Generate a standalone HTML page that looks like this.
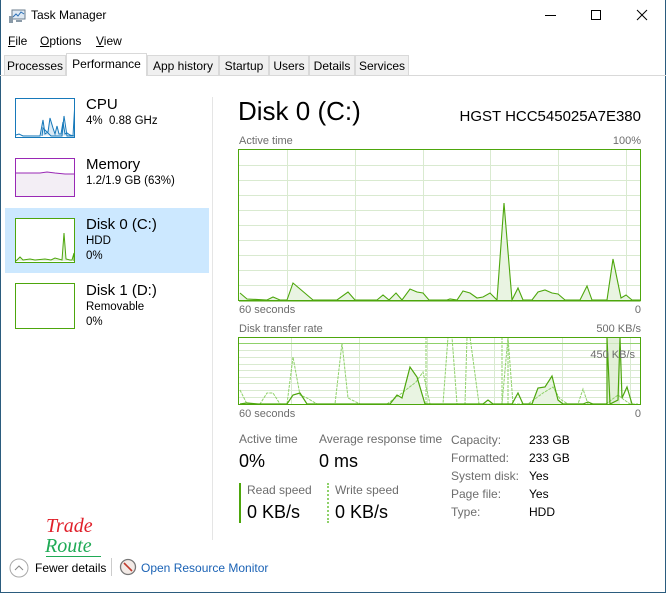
<!DOCTYPE html>
<html><head><meta charset="utf-8"><style>
*{margin:0;padding:0;box-sizing:border-box}
body{width:666px;height:593px;position:relative;background:#fff;font-family:"Liberation Sans",sans-serif;color:#000;overflow:hidden}
.a{position:absolute;white-space:nowrap}
.g{color:#6d6d6d;font-size:11px}
.tab{position:absolute;top:55px;height:20px;border:1px solid #d9d9d9;border-bottom:none;background:#f0f0f0;font-size:12px;padding:3px 0 0 0;text-align:center}
</style></head><body>
<div class="a" style="left:0;top:0;width:1px;height:593px;background:#2b5c7e"></div>
<div class="a" style="right:0;top:0;width:1px;height:593px;background:#2b5c7e"></div>
<div class="a" style="left:0;bottom:0;width:666px;height:1px;background:#2b5c7e"></div>
<svg class="a" style="left:9px;top:8px" width="18" height="16"><rect x="3" y="2" width="13" height="9" fill="#dfe9f3" stroke="#6b7d8e"/><polyline points="4,9 7,6 9,8 12,4 15,6" fill="none" stroke="#2b6fb5"/><rect x="0" y="8" width="4" height="7" fill="#8a9aa8"/><rect x="7" y="12" width="6" height="2" fill="#8a9aa8"/></svg>
<div class="a" style="left:31px;top:8px;font-size:12px">Task Manager</div>
<div class="a" style="left:545px;top:15px;width:11px;height:1px;background:#000"></div>
<div class="a" style="left:591px;top:10px;width:10px;height:10px;border:1px solid #000"></div>
<svg class="a" style="left:636px;top:9px" width="12" height="12"><path d="M1 1L11 11M11 1L1 11" stroke="#000"/></svg>
<div class="a" style="left:8px;top:34px;font-size:12px"><u>F</u>ile</div>
<div class="a" style="left:40px;top:34px;font-size:12px"><u>O</u>ptions</div>
<div class="a" style="left:96px;top:34px;font-size:12px"><u>V</u>iew</div>
<div class="a" style="left:0;top:75px;width:666px;height:1px;background:#d9d9d9"></div>
<div class="tab" style="left:4px;width:62px">Processes</div>
<div class="tab" style="left:66px;top:53px;height:23px;width:81px;background:#fff;padding-top:3px">Performance</div>
<div class="tab" style="left:147px;width:72px">App history</div>
<div class="tab" style="left:219px;width:50px">Startup</div>
<div class="tab" style="left:269px;width:40px">Users</div>
<div class="tab" style="left:309px;width:46px">Details</div>
<div class="tab" style="left:355px;width:54px">Services</div>
<div class="a" style="left:212px;top:97px;width:1px;height:443px;background:#e5e5e5"></div>
<div class="a" style="left:5px;top:208px;width:204px;height:65px;background:#cce8ff"></div>
<svg class="a" style="left:15px;top:98px" width="60" height="41"><rect x="0.5" y="0.5" width="59" height="39" fill="#fff" stroke="#1779ba"/><polyline points="1,37 4,36 8,38 25,38 28,22 30,36 33,34 35,20 38,30 40,36 42,28 44,36 46,36 48,24 50,36 52,35 55,37 59,38" fill="#dbeaf5" stroke="#1779ba"/><polyline points="27,38 28,30 36,38 47,38 49,18 52,38 58,38 60,3" fill="none" stroke="#1779ba"/></svg>
<div class="a" style="left:86px;top:96px;font-size:15px">CPU</div>
<div class="a" style="left:86px;top:115px;font-size:11.5px">4%&nbsp; 0.88 GHz</div>
<svg class="a" style="left:15px;top:158px" width="60" height="40"><rect x="0.5" y="0.5" width="59" height="38" fill="#fff" stroke="#9928b5"/><path d="M1 15L25 15L32 14L40 15L50 16L59 16L59 38L1 38Z" fill="#f3eef5" stroke="none"/><polyline points="1,15 25,15 32,14 40,15 50,16 59,16" fill="none" stroke="#9928b5"/></svg>
<div class="a" style="left:86px;top:156px;font-size:15px">Memory</div>
<div class="a" style="left:86px;top:175px;font-size:11.5px">1.2/1.9 GB (63%)</div>
<svg class="a" style="left:15px;top:218px" width="60" height="46"><rect x="0.5" y="0.5" width="59" height="44" fill="#fff" stroke="#4da60c"/><polyline points="1,43 5,39 8,42 15,41 20,42 30,41 36,42 40,40 47,42 49,15 51,41 55,42 57,42 59,35 59,43" fill="#e6f2dc" stroke="#4da60c"/></svg>
<div class="a" style="left:86px;top:216px;font-size:15px">Disk 0 (C:)</div>
<div class="a" style="left:86px;top:235px;font-size:11.5px">HDD</div>
<div class="a" style="left:86px;top:250px;font-size:11.5px">0%</div>
<svg class="a" style="left:15px;top:283px" width="60" height="46"><rect x="0.5" y="0.5" width="59" height="45" fill="#fff" stroke="#4da60c"/></svg>
<div class="a" style="left:86px;top:282px;font-size:15px">Disk 1 (D:)</div>
<div class="a" style="left:86px;top:301px;font-size:11.5px">Removable</div>
<div class="a" style="left:86px;top:316px;font-size:11.5px">0%</div>
<div class="a" style="left:238px;top:96px;font-size:26px">Disk 0 (C:)</div>
<div class="a" style="right:25px;top:108px;font-size:15px">HGST HCC545025A7E380</div>
<div class="a g" style="left:239px;top:135px">Active time</div>
<div class="a g" style="right:25px;top:135px">100%</div>
<svg class="a" style="left:238px;top:149px" width="404" height="153">
<g stroke="#d9ead0" stroke-width="1">
<path d="M0 16.5H403M0 31.5H403M0 46.5H403M0 61.5H403M0 76.5H403M0 91.5H403M0 106.5H403M0 121.5H403M0 136.5H403"/>
<path d="M49.5 0V152M117.5 0V152M185.5 0V152M252.5 0V152M320.5 0V152M388.5 0V152"/></g>
<polyline points="2,144 9,150 29,151 35,148 42,151 49,151 55,134 75,151 99,151 110,143 117,151 139,151 145,146 151,151 158,144 164,151 172,140 179,143 185,144 191,151 209,151 212,150 219,151 225,142 232,144 239,149 245,148 252,144 259,151 266,54 274,151 280,139 285,151 294,151 300,143 307,141 314,144 320,145 327,151 342,151 349,137 354,151 369,151 375,110 383,149 388,146 394,151 402,151 402,152 1,152" fill="#e9f4e2" stroke="#4da60c" stroke-width="1.1"/>
<rect x="0.5" y="0.5" width="402" height="151" fill="none" stroke="#4da60c"/>
</svg>
<div class="a g" style="left:239px;top:304px">60 seconds</div>
<div class="a g" style="right:25px;top:304px">0</div>
<div class="a g" style="left:239px;top:323px">Disk transfer rate</div>
<div class="a g" style="right:25px;top:323px">500 KB/s</div>
<svg class="a" style="left:238px;top:337px" width="404" height="69">
<g stroke="#d9ead0"><path d="M0 13.5H403M0 20.5H403M0 27.5H403M0 33.5H403M0 40.5H403M0 46.5H403M0 53.5H403M0 60.5H403"/><path d="M53.5 0V68M121.5 0V68M189.5 0V68M256.5 0V68M324.5 0V68M392.5 0V68"/></g>
<path d="M1 6.5H402" stroke="#8fd16a"/>
<rect x="369" y="0" width="13" height="68" fill="#dceccf" opacity="0.8"/>
<polyline points="152,67 159,58 164,61 172,30 179,40 187,67" fill="#e9f4e2" stroke="none"/>
<polyline points="294,67 300,51 307,50 314,39 320,63 325,67" fill="#e9f4e2" stroke="none"/>
<polyline points="2,53 9,67 22,67 29,56 35,56 42,67 49,67 55,20 62,58 69,61 79,67 97,67 104,6 110,61 122,67 149,67 164,56 178,45 185,35 192,67 205,67 210,0 214,0 219,67 227,67 229,0 232,0 241,67 256,67 264,67 270,0 275,67 290,67 305,56 315,50 322,62 330,67 340,67 345,52 350,67 368,67 380,58 385,62 392,67 400,67" fill="none" stroke="#8fd16a" stroke-width="1" stroke-dasharray="3,1"/>
<path d="M188 0V68M264 0V68M270 0V68" stroke="#8fd16a" stroke-dasharray="3,1"/>
<polyline points="2,67 9,66 20,67 49,67 55,58 62,56 69,67 152,67 159,58 164,61 172,30 179,40 187,67 245,67 250,63 255,67 274,67 280,56 285,67 294,67 300,51 307,50 314,39 320,63 325,67 345,67 350,65 355,67 369,67 369,1 372,67 380,63 382,1 384,61 389,50 394,67" fill="none" stroke="#4da60c" stroke-width="1.2"/>
<text x="397" y="21" text-anchor="end" font-family="Liberation Sans" font-size="11" fill="#6d6d6d">450 KB/s</text>
<rect x="0.5" y="0.5" width="402" height="67" fill="none" stroke="#4da60c"/>
</svg>
<div class="a g" style="left:239px;top:408px">60 seconds</div>
<div class="a g" style="right:25px;top:408px">0</div>
<div class="a g" style="left:239px;top:432px;font-size:12px">Active time</div>
<div class="a g" style="left:319px;top:432px;font-size:12px">Average response time</div>
<div class="a" style="left:239px;top:451px;font-size:18px">0%</div>
<div class="a" style="left:319px;top:451px;font-size:18px">0 ms</div>
<div class="a" style="left:239px;top:483px;width:2px;height:40px;background:#4da60c"></div>
<div class="a" style="left:327px;top:483px;width:0;height:40px;border-left:2px dotted #8fd16a"></div>
<div class="a g" style="left:247px;top:483px;font-size:12px">Read speed</div>
<div class="a g" style="left:335px;top:483px;font-size:12px">Write speed</div>
<div class="a" style="left:247px;top:502px;font-size:18px">0 KB/s</div>
<div class="a" style="left:335px;top:502px;font-size:18px">0 KB/s</div>
<div class="a g" style="left:451px;top:431px;font-size:12px;line-height:18px">Capacity:<br>Formatted:<br>System disk:<br>Page file:<br>Type:</div>
<div class="a" style="left:529px;top:431px;font-size:12px;line-height:18px">233 GB<br>233 GB<br>Yes<br>Yes<br>HDD</div>
<div class="a" style="left:46px;top:515px;font-family:'Liberation Serif',serif;font-style:italic;font-size:20px;color:#e0202a">Trade</div>
<div class="a" style="left:45px;top:535px;font-family:'Liberation Serif',serif;font-style:italic;font-size:20px;color:#1faa55">Route</div>
<div class="a" style="left:46px;top:556px;width:55px;height:1px;background:#1faa55"></div>
<svg class="a" style="left:9px;top:558px" width="20" height="20"><circle cx="10" cy="10" r="9" fill="#fff" stroke="#aaa"/><path d="M6 12L10 8L14 12" fill="none" stroke="#888"/></svg>
<div class="a" style="left:35px;top:561px;font-size:12px">Fewer details</div>
<div class="a" style="left:111px;top:558px;width:1px;height:18px;background:#ccc"></div>
<svg class="a" style="left:119px;top:558px" width="18" height="18"><circle cx="9" cy="9" r="7.5" fill="#f3eae6" stroke="#777" stroke-width="1.3"/><path d="M5 5L13 13" stroke="#c0392b" stroke-width="1.6"/></svg>
<div class="a" style="left:141px;top:561px;font-size:12px;color:#1a62b5">Open Resource Monitor</div>
</body></html>
